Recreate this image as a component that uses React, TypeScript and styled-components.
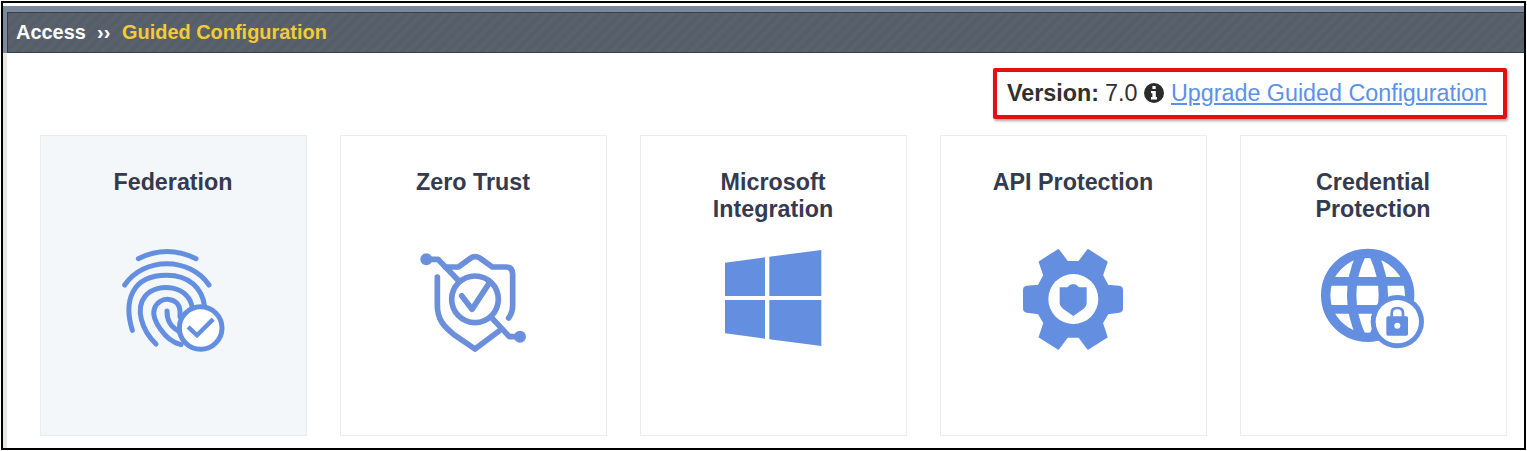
import React from "react";
import styled, { createGlobalStyle } from "styled-components";

const BLUE = "#648fe0";

const GlobalStyle = createGlobalStyle`
  * { box-sizing: border-box; }
  body { margin: 0; background: #fff; font-family: "Liberation Sans", Arial, sans-serif; overflow: hidden; }
`;

const Frame = styled.div`
  width: 1525px;
  height: 449px;
  margin: 1px 0 0 1px;
  border: 2px solid #000;
  padding-top: 3px;
  display: flex;
  flex-direction: column;
`;

const HeaderRail = styled.div`
  height: 47px;
  padding: 6px 0 0 4px;
  background: #7b899b;
  flex: none;
`;

const Header = styled.header`
  height: 41px;
  display: flex;
  align-items: center;
  border: 1px solid #3b4046;
  border-width: 1px 0 1px 1px;
  background: repeating-linear-gradient(135deg, #565e69 0 4px, #59616c 4px 8px);
  padding: 0 0 2px 8px;
  font-size: 19.95px;
  font-weight: bold;
  line-height: 24px;
  white-space: pre;
`;

const Root = styled.span`
  color: #fff;
  width: 81px;
`;

const Separator = styled.span`
  color: #fff;
  width: 25px;
`;

const Current = styled.span`
  color: #f4cb35;
`;

const Body = styled.main`
  flex: 1;
  border-left: 4px solid #e7e7e1;
  padding: 15px 17px 0 33px;
`;

const VersionBox = styled.div`
  width: 514px;
  height: 51px;
  margin-left: auto;
  border: 4px solid #e30f13;
  border-radius: 2px;
  box-shadow: 1px 2px 3px rgba(0, 0, 0, 0.35);
  display: flex;
  align-items: center;
  padding: 0 0 1px 10px;
  font-size: 23.3px;
  color: #303030;
  white-space: nowrap;
`;

const Label = styled.b`
  width: 98px;
`;

const Num = styled.span`
  width: 39px;
`;

const InfoIcon = styled.svg`
  width: 20px;
  height: 20px;
  margin: -1px 7px 0 0;
`;

const Link = styled.a`
  color: #5b91ea;
  text-decoration: underline;
  text-decoration-thickness: 2px;
  text-underline-offset: 2px;
`;

const Cards = styled.div`
  display: grid;
  grid-template-columns: repeat(5, 267px);
  gap: 33px;
  margin-top: 16px;
`;

const Card = styled.section<{ $active?: boolean }>`
  height: 301px;
  border: 1px solid #e9ecf1;
  background: ${(p) => (p.$active ? "#f3f7fa" : "#fff")};
  display: flex;
  flex-direction: column;
  align-items: center;
`;

const Title = styled.h2`
  height: 66px;
  width: 190px;
  margin: 33px 1px 0 0;
  font-size: 23.3px;
  line-height: 27px;
  text-align: center;
  color: #343a50;
`;

const Art = styled.svg`
  width: 130px;
  height: 130px;
  flex: none;
  margin-left: 3px;
  color: ${BLUE};
`;

const Fingerprint = () => (
  <Art viewBox="0 0 390 390" fill="none" stroke="currentColor" strokeWidth="15" strokeLinecap="round">
    <path d="M85 71 Q171 28 258 71" />
    <path d="M44 150 C102 65 239 65 297 150" />
    <path d="M67 286 C40 198 65 121 170 121 C240 121 276 161 284 214" />
    <path d="M138 327 C94 285 76 220 105 184 C142 139 242 151 247 222" />
    <path d="M213 329 C165 318 121 250 134 219 C149 181 208 185 210 229 V245" />
    <path d="M171 228 C171 256 180 273 207 289" />
    <circle cx="272" cy="279" r="64" fill="#fff" stroke="currentColor" strokeWidth="15" />
    <path d="M239 280 L261 301 L305 257" strokeWidth="13" strokeLinecap="square" />
  </Art>
);

const ZeroTrust = () => (
  <Art viewBox="0 0 390 390" fill="none" stroke="#6c8fdc" strokeWidth="17" strokeLinecap="round" strokeLinejoin="round">
    <path d="M82 126 V211 C82 253 101 274 132 299 L195 342 L267 288" />
    <path d="M106 96 H145 L181 70 Q195 60 211 70 L247 96 H288 Q308 96 308 118 V211 Q308 233 296 249" />
    <path d="M49 73 H84 L146 137" />
    <path d="M244 247 L298 305 H329" />
    <circle cx="195" cy="193" r="70" />
    <path d="M155 182 L186 223 L237 145" />
    <circle cx="49" cy="73" r="18" fill="#6c8fdc" stroke="none" />
    <circle cx="330" cy="305" r="18" fill="#6c8fdc" stroke="none" />
  </Art>
);

const Windows = () => (
  <Art viewBox="0 0 390 390" fill="currentColor">
    <path d="M45 83 L165 67 V183 H45Z M178 65 L334 45 V183 H178Z M45 195 H165 V311 L45 295Z M178 195 H334 V333 L178 313Z" />
  </Art>
);

const Gear = () => (
  <Art viewBox="0 0 390 390" fill="currentColor">
    <path
      stroke="currentColor"
      strokeWidth="6"
      strokeLinejoin="round"
      d="M145 45 L172 81 H207 L234 45 L290 81 L276 121 L293 152 L327 155 Q336 156 336 164 V221 Q336 228 327 230 L293 235 L276 264 L290 306 L234 341 L207 305 H172 L145 341 L89 306 L103 264 L86 235 L51 230 Q42 228 42 221 V164 Q42 156 51 155 L86 152 L103 121 L89 81Z"
    />
    <circle cx="190" cy="192" r="75" fill="#fff" />
    <path d="M149 157 H172 Q180 147 190 147 Q199 147 207 157 H230 V205 Q230 214 221 221 L190 243 L159 221 Q149 214 149 205Z" />
  </Art>
);

const GlobeLock = () => (
  <Art viewBox="0 0 390 390" fill="none" stroke="currentColor">
    <circle cx="173" cy="181" r="126" strokeWidth="28" />
    <path d="M53 139 H294 M53 223 H250" strokeWidth="26" />
    <path d="M153 60 Q97 180 153 303 M192 60 Q248 180 192 303" strokeWidth="28" />
    <circle cx="262" cy="260" r="80" fill="currentColor" stroke="none" />
    <circle cx="262" cy="260" r="65" fill="#fff" stroke="none" />
    <path d="M245 246 V234 Q245 219 262 219 Q279 219 279 234 V246" strokeWidth="8" />
    <rect x="229" y="244" width="65" height="58" rx="5" fill="currentColor" stroke="none" />
    <circle cx="262" cy="272" r="9" fill="#fff" stroke="none" />
  </Art>
);

const cards = [
  { title: "Federation", Icon: Fingerprint, active: true },
  { title: "Zero Trust", Icon: ZeroTrust },
  { title: "Microsoft Integration", Icon: Windows },
  { title: "API Protection", Icon: Gear },
  { title: "Credential Protection", Icon: GlobeLock },
];

export default function App() {
  return (
    <>
      <GlobalStyle />
      <Frame>
        <HeaderRail>
          <Header>
            <Root>Access</Root>
            <Separator>››</Separator>
            <Current>Guided Configuration</Current>
          </Header>
        </HeaderRail>
        <Body>
          <VersionBox>
            <Label>Version:</Label>
            <Num>7.0</Num>
            <InfoIcon viewBox="0 0 20 20">
              <circle cx="10" cy="10" r="10" fill="#2b2b2b" />
              <path fill="#fff" d="M8.4 3h3.3v3H8.4zM7 8h4.8v6H13v2.4H7V14h1.4v-3.7H7z" />
            </InfoIcon>
            <Link>Upgrade Guided Configuration</Link>
          </VersionBox>
          <Cards>
            {cards.map(({ title, Icon, active }) => (
              <Card key={title} $active={active}>
                <Title>{title}</Title>
                <Icon />
              </Card>
            ))}
          </Cards>
        </Body>
      </Frame>
    </>
  );
}
